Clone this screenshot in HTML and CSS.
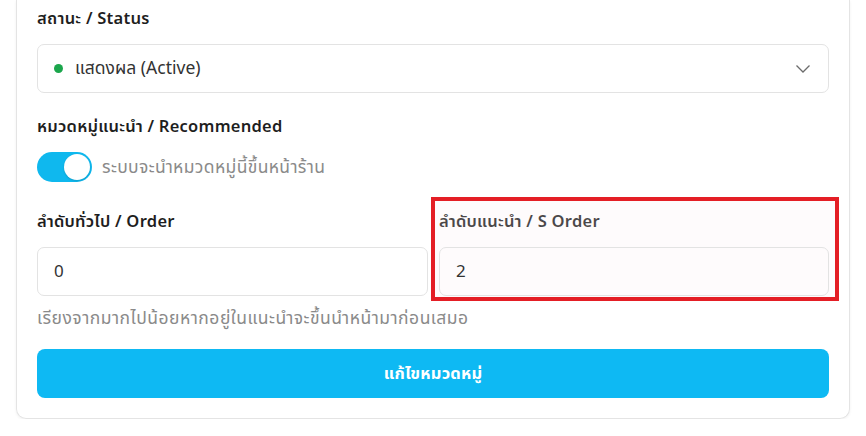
FILE: index.html
```html
<!DOCTYPE html>
<html lang="th">
<head>
<meta charset="utf-8">
<title>แก้ไขหมวดหมู่</title>
<link rel="stylesheet" href="styles.css">
</head>
<body>
<div class="card">
  <div class="field">
    <div class="label">สถานะ / Status</div>
    <div class="select">
      <span class="dot"></span>
      <span class="select-text">แสดงผล (Active)</span>
      <svg class="chevron" width="16" height="10" viewBox="0 0 16 10"><polyline points="1.5,1.5 8,8 14.5,1.5" fill="none" stroke="#6b6b6b" stroke-width="1.3"/></svg>
    </div>
  </div>
  <div class="field field-toggle">
    <div class="label">หมวดหมู่แนะนำ / Recommended</div>
    <div class="toggle-row">
      <span class="toggle"><span class="knob"></span></span>
      <span class="muted">ระบบจะนำหมวดหมู่นี้ขึ้นหน้าร้าน</span>
    </div>
  </div>
  <div class="grid">
    <div class="col">
      <div class="label">ลำดับทั่วไป / Order</div>
      <div class="input">0</div>
    </div>
    <div class="col col-marked">
      <div class="label">ลำดับแนะนำ / S Order</div>
      <div class="input input-marked">2</div>
    </div>
  </div>
  <div class="help muted">เรียงจากมากไปน้อยหากอยู่ในแนะนำจะขึ้นนำหน้ามาก่อนเสมอ</div>
  <div class="button">แก้ไขหมวดหมู่</div>
</div>
</body>
</html>
```

FILE: styles.css
```css
* { box-sizing: border-box; }
html, body { margin: 0; padding: 0; background: #ffffff; }
body {
  font-family: "Noto Sans Thai", "Noto Sans", "DejaVu Sans", sans-serif;
  color: #222;
}
.card {
  margin-left: 16px;
  width: 834px;
  border: 1px solid #e4e4e4;
  border-top: none;
  border-radius: 0 0 10px 10px;
  padding: 8px 20px 20px 20px;
  box-shadow: 0 1px 3px rgba(0,0,0,0.06);
}
.field { margin-bottom: 23px; }
.field-toggle { margin-bottom: 29px; }
.label {
  font-size: 16.5px;
  letter-spacing: 0.25px;
  line-height: 21px;
  font-weight: 600;
  color: #1e1e1e;
  margin-bottom: 15px;
}
.select {
  height: 49px;
  border: 1px solid #e3e3e3;
  border-radius: 7px;
  display: flex;
  align-items: center;
  padding: 0 17px 0 16px;
}
.dot {
  width: 9px; height: 9px; border-radius: 50%;
  background: #1ba64c;
  margin-right: 12px;
}
.select-text { font-size: 17.5px; color: #333; flex: 1; }
.chevron { display: block; }
.toggle-row { display: flex; align-items: center; height: 30px; }
.toggle {
  width: 55px; height: 30px; border-radius: 15px;
  background: #0fb8ee;
  display: flex; align-items: center; justify-content: flex-end;
  padding-right: 2px;
  margin-right: 10px;
}
.knob {
  width: 26px; height: 26px; border-radius: 50%;
  background: #fff;
  box-shadow: 0 1px 2px rgba(0,0,0,0.15);
}
.muted { color: #8a8a8a; font-size: 17.5px; letter-spacing: 0.35px; }
.grid {
  display: grid;
  grid-template-columns: 391px 390px;
  column-gap: 11px;
}
.col { position: relative; }
.col-marked::before {
  content: "";
  position: absolute;
  top: -14px; left: -8px; right: -10px; bottom: -5px;
  border: 4px solid #e41e25;
  background: rgba(250, 235, 240, 0.2);
  pointer-events: none;
}
.input {
  height: 49px;
  border: 1px solid #e3e3e3;
  border-radius: 7px;
  display: flex; align-items: center;
  padding-left: 16px;
  font-size: 17px;
  color: #333;
  position: relative;
}
.help { margin-top: 13px; line-height: 20px; letter-spacing: 0.5px; }
.button {
  margin-top: 20px;
  height: 49px;
  border-radius: 8px;
  background: #0eb9f3;
  color: #fff;
  font-size: 16.5px;
  font-weight: 700;
  letter-spacing: 0.2px;
  display: flex; align-items: center; justify-content: center;
}
```
